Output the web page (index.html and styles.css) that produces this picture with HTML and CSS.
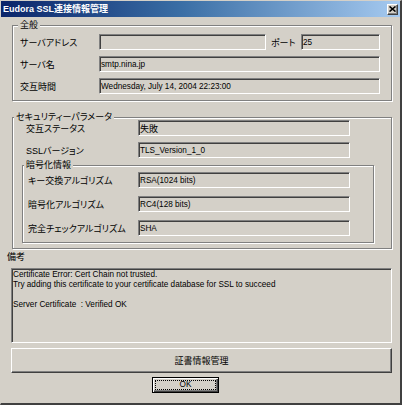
FILE: index.html
```html
<!DOCTYPE html>
<html lang="ja">
<head>
<meta charset="utf-8">
<title>Eudora SSL連接情報管理</title>
<link rel="stylesheet" href="styles.css">
</head>
<body>
<div class="window">
  <div class="titlebar">
    <span class="title">Eudora SSL連接情報管理</span>
    <span class="close-btn"><svg width="7" height="6" viewBox="0 0 7 6"><path d="M0.5 0.5 L6.5 5.5 M6.5 0.5 L0.5 5.5" stroke="#000" stroke-width="1.6" fill="none"/></svg></span>
  </div>
  <div class="content">
    <div class="group g-general">
      <div class="legend lg-general">全般</div>
      <div class="rows rows-general">
        <div class="row">
          <span class="lbl w-general">サーバアドレス</span>
          <span class="field f-addr"></span>
          <span class="lbl port-lbl">ポート</span>
          <span class="field f-port">25</span>
        </div>
        <div class="row">
          <span class="lbl w-general">サーバ名</span>
          <span class="field f-full">smtp.nina.jp</span>
        </div>
        <div class="row">
          <span class="lbl w-general">交互時間</span>
          <span class="field f-full">Wednesday, July 14, 2004 22:23:00</span>
        </div>
      </div>
    </div>

    <div class="group g-security">
      <div class="legend lg-security">セキュリティーパラメータ</div>
      <div class="rows rows-security">
        <div class="row">
          <span class="lbl w-security">交互ステータス</span>
          <span class="field f-param cjk">失敗</span>
        </div>
        <div class="row">
          <span class="lbl w-security">SSLバージョン</span>
          <span class="field f-param">TLS_Version_1_0</span>
        </div>
      </div>
      <div class="group g-cipher">
        <div class="legend lg-cipher">暗号化情報</div>
        <div class="rows rows-cipher">
          <div class="row">
            <span class="lbl w-cipher">キー交換アルゴリズム</span>
            <span class="field f-param">RSA(1024 bits)</span>
          </div>
          <div class="row">
            <span class="lbl w-cipher">暗号化アルゴリズム</span>
            <span class="field f-param">RC4(128 bits)</span>
          </div>
          <div class="row">
            <span class="lbl w-cipher">完全チェックアルゴリズム</span>
            <span class="field f-param">SHA</span>
          </div>
        </div>
      </div>
    </div>

    <div class="memo-lbl">備考</div>
    <div class="memo"><div class="memo-text">Certificate Error: Cert Chain not trusted.
Try adding this certificate to your certificate database for SSL to succeed

Server Certificate  : Verified OK</div></div>

    <div class="btn wide-btn">証書情報管理</div>
    <div class="btn ok-btn"><span class="focus">OK</span></div>
  </div>
</div>
</body>
</html>
```
FILE: styles.css
```css
html, body {
  margin: 0;
  padding: 0;
  background: #d4d0c8;
}
body {
  font-family: "Liberation Sans", "Noto Sans CJK JP", sans-serif;
  font-size: 8.2px;
  font-feature-settings: "palt";
  color: #000;
}
.window {
  box-sizing: border-box;
  width: 402px;
  height: 405px;
  border-style: solid;
  border-width: 1px 2px 2px 1px;
  border-color: #d4d0c8 #404040 #404040 #d4d0c8;
  background: #d4d0c8;
  display: flex;
  flex-direction: column;
}
.titlebar {
  height: 16px;
  flex: none;
  display: flex;
  align-items: center;
  justify-content: space-between;
  padding: 0 2px 0 2px;
  background: linear-gradient(90deg, #0a246a 0%, #3a6ea5 45%, #a6caf0 100%);
}
.title {
  color: #fff;
  font-weight: bold;
  font-size: 9px;
  line-height: 12px;
  white-space: nowrap;
}
.close-btn {
  box-sizing: border-box;
  width: 11px;
  height: 11px;
  background: #d4d0c8;
  border: 1px solid;
  border-color: #fff #404040 #404040 #fff;
  box-shadow: inset -1px -1px 0 #808080;
  display: flex;
  align-items: center;
  justify-content: center;
}
.close-btn svg { display: block; }

.content {
  display: flex;
  flex-direction: column;
  align-items: flex-start;
}

.group {
  box-sizing: border-box;
  border: 1px solid #808080;
  box-shadow: 1px 1px 0 #fff, inset 1px 1px 0 #fff;
}
.legend {
  width: max-content;
  background: #d4d0c8;
  padding: 0 2px;
  font-size: 9px;
  line-height: 12px;
  margin-top: -7px;
  white-space: nowrap;
}
.g-general {
  margin: 8px 0 0 11px;
  width: 380px;
  padding-bottom: 6px;
}
.lg-general { margin-left: 5px; }
.rows {
  display: grid;
}
.rows-general {
  margin-top: 3px;
  row-gap: 6px;
  padding-left: 7px;
}
.g-security {
  margin: 16px 0 0 11px;
  width: 380px;
  padding-bottom: 5px;
}
.lg-security { margin-left: 1px; margin-bottom: -3px; }
.rows-security {
  row-gap: 6px;
  padding-left: 13px;
}
.g-cipher {
  margin: 7px 0 0 9px;
  width: 352px;
  padding-bottom: 6px;
}
.lg-cipher { margin-left: 1px; margin-bottom: 1px; }
.rows-cipher {
  row-gap: 8px;
  padding-left: 5px;
}
.row {
  display: flex;
  align-items: center;
  height: 16px;
}
.lbl {
  font-size: 9px;
  white-space: nowrap;
  flex: none;
}
.w-general { width: 79px; }
.w-security { width: 112px; }
.w-cipher { width: 110px; }
.port-lbl { width: 30px; margin-left: 5px; }

.field {
  box-sizing: border-box;
  height: 16px;
  flex: none;
  display: flex;
  align-items: center;
  padding-left: 1px;
  border: 1px solid;
  border-color: #808080 #fff #fff #808080;
  box-shadow: inset 1px 1px 0 #404040;
  white-space: nowrap;
  overflow: hidden;
}
.cjk { font-size: 9px; }
.f-addr { width: 167px; }
.f-port { width: 79px; }
.f-full { width: 281px; }
.f-param { width: 212px; }

.memo-lbl {
  margin: 2px 0 0 6px;
  font-size: 9px;
  line-height: 12px;
}
.memo {
  box-sizing: border-box;
  margin: 5px 0 0 10px;
  width: 381px;
  height: 75px;
  border: 1px solid;
  border-color: #808080 #fff #fff #808080;
  box-shadow: inset 1px 1px 0 #404040, inset -1px -1px 0 #d4d0c8;
  padding: 1px 1px 0 1px;
  overflow: hidden;
}
.memo-text {
  white-space: pre;
  line-height: 10px;
}

.btn {
  box-sizing: border-box;
  display: flex;
  align-items: center;
  justify-content: center;
  background: #d4d0c8;
}
.wide-btn {
  margin: 5px 0 0 10px;
  width: 381px;
  height: 25px;
  border: 1px solid;
  border-color: #fff #404040 #404040 #fff;
  box-shadow: inset -1px -1px 0 #808080;
  font-size: 9px;
}
.ok-btn {
  margin: 4px 0 0 151px;
  width: 67px;
  height: 16px;
  border: 1px solid #000;
  box-shadow: inset 1px 1px 0 #fff, inset -1px -1px 0 #404040, inset -2px -2px 0 #808080;
  padding: 2px;
}
.focus {
  box-sizing: border-box;
  width: 100%;
  height: 100%;
  border: 1px dotted #000;
  display: flex;
  align-items: center;
  justify-content: center;
  line-height: 1;
}
```
